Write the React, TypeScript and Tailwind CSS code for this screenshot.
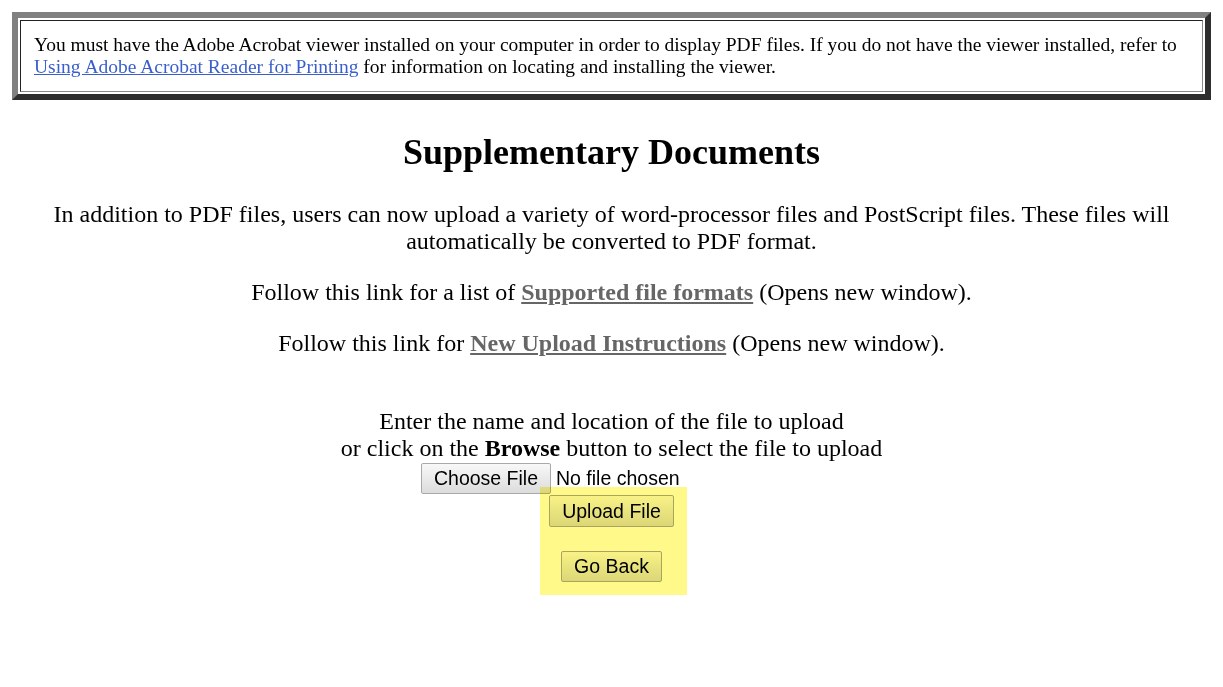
export default function App() {
  return (
    <div className="relative min-h-[687px] bg-white font-['Liberation_Serif',serif] text-black">
      {/* viewer notice */}
      <div className="px-[12px] pt-[12px]">
        <div className="border-[6px] border-t-[#808080] border-l-[#808080] border-b-[#2e2e2e] border-r-[#2e2e2e] p-[2px]">
          <div className="border border-t-[#222] border-l-[#222] border-b-[#8a8a8a] border-r-[#8a8a8a] px-[13px] pt-[13px] pb-[13px] text-[19.5px] leading-[22px]">
            You must have the Adobe Acrobat viewer installed on your computer in order to display PDF files. If you do not have the viewer installed, refer to{" "}
            <a href="#" className="text-[#3a5fcd] underline">
              Using Adobe Acrobat Reader for Printing
            </a>{" "}
            for information on locating and installing the viewer.
          </div>
        </div>
      </div>

      <div className="px-[20px] text-center">
        <h1 className="mt-[32px] text-[36px] leading-[40px] font-bold">
          Supplementary Documents
        </h1>
        <p className="mt-[29px] text-[24px] leading-[27px]">
          In addition to PDF files, users can now upload a variety of word-processor files and PostScript files. These files will automatically be converted to PDF format.
        </p>
        <p className="mt-[24px] text-[24px] leading-[27px]">
          Follow this link for a list of{" "}
          <a href="#" className="font-bold text-[#666] underline">
            Supported file formats
          </a>{" "}
          (Opens new window).
        </p>
        <p className="mt-[24px] text-[24px] leading-[27px]">
          Follow this link for{" "}
          <a href="#" className="font-bold text-[#666] underline">
            New Upload Instructions
          </a>{" "}
          (Opens new window).
        </p>
        <p className="mt-[51px] text-[24px] leading-[27px]">
          Enter the name and location of the file to upload
          <br />
          or click on the <b>Browse</b> button to select the file to upload
        </p>
      </div>

      <div className="mt-[1px] font-['Liberation_Sans',Arial,sans-serif] text-[19.5px]">
        <div className="mx-auto flex w-[381px] items-center">
          <button className="h-[31px] w-[130px] rounded-[2px] border border-[#a9a9a9] bg-gradient-to-b from-[#f8f8f8] to-[#dcdcdc] pt-[1px] leading-none">
            Choose File
          </button>
          <span className="ml-[5px]">No file chosen</span>
        </div>
        <div className="mt-[1px] flex justify-center">
          <button className="h-[32px] w-[125px] rounded-[2px] border border-[#a9a9a9] bg-gradient-to-b from-[#f8f8f8] to-[#dcdcdc] pt-[1px] leading-none">
            Upload File
          </button>
        </div>
        <div className="mt-[24px] flex justify-center">
          <button className="h-[31px] w-[101px] rounded-[2px] border border-[#a9a9a9] bg-gradient-to-b from-[#f8f8f8] to-[#dcdcdc] pt-[1px] leading-none">
            Go Back
          </button>
        </div>
      </div>

      {/* highlight marker over the buttons */}
      <div className="pointer-events-none absolute left-[540px] top-[487px] h-[108px] w-[147px] bg-[#fff98a] mix-blend-multiply" />
    </div>
  );
}
